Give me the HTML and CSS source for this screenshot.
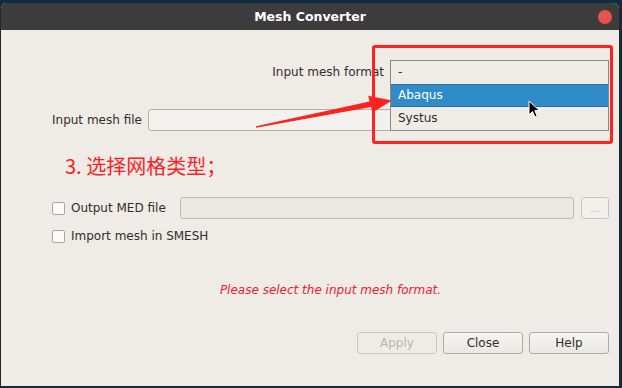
FILE: index.html
```html
<!DOCTYPE html>
<html lang="en">

<head>
    <meta charset="UTF-8" />
    <title>Mesh Converter</title>
    <link rel="stylesheet" href="styles.css">
</head>

<body>
    <div class="window">
        <div class="titlebar">
            <span class="title">Mesh Converter</span>
            <span class="close-dot"></span>
        </div>

        <div class="dialog">
            <div class="format-row">
                <label>Input mesh format</label>
                <div class="combo">-</div>
            </div>

            <div class="file-row">
                <label>Input mesh file</label>
                <div class="field"></div>
                <div class="dots">...</div>
            </div>

            <p class="note">3. 选择网格类型；</p>

            <div class="output-row">
                <div class="check-item wide">
                    <span class="box"></span>
                    <span>Output MED file</span>
                </div>
                <div class="field disabled"></div>
                <div class="dots disabled">...</div>
            </div>

            <div class="import-row">
                <div class="check-item">
                    <span class="box"></span>
                    <span>Import mesh in SMESH</span>
                </div>
            </div>

            <p class="error">Please select the input mesh format.</p>

            <div class="buttons">
                <button class="btn" disabled>Apply</button>
                <button class="btn">Close</button>
                <button class="btn">Help</button>
            </div>
        </div>
    </div>

    <!-- open combo popup -->
    <ul class="popup">
        <li>-</li>
        <li class="current">Abaqus</li>
        <li>Systus</li>
    </ul>

    <!-- annotation marks -->
    <div class="mark-box"></div>
    <svg class="mark-arrow" width="622" height="388" viewBox="0 0 622 388">
        <polygon points="255.9,126.3 369.6,101.6 368.2,95.8 392,100.5 372.4,112.6 371.1,106.9 256.1,127.7" fill="#ff2020" />
    </svg>

    <svg class="pointer" width="14" height="20" viewBox="0 0 14 20">
        <path d="M1 1 L1 15 L4.5 11.5 L7 17 L9.2 16 L6.8 10.6 L11.5 10.6 Z" fill="#000" stroke="#fff" stroke-width="1" stroke-linejoin="round" />
    </svg>
</body>

</html>
```

FILE: styles.css
```css
* {
    margin: 0;
    padding: 0;
    box-sizing: border-box;
}

body {
    background-color: #0f2d3f;
    font-family: 'DejaVu Sans', sans-serif;
    font-size: 12px;
    color: #2f2e2c;
    width: 622px;
    height: 388px;
    overflow: hidden;
    padding-top: 3px;
}

.window {
    width: 620px;
    height: 384px;
    border: 1px solid #262626;
    border-top: none;
    border-radius: 6px 6px 0 0;
    background-color: #efebe7;
    overflow: hidden;
}

.titlebar {
    height: 27px;
    background-color: #3c3c3c;
    display: flex;
    align-items: center;
    justify-content: center;
    position: relative;
}

.title {
    color: #ffffff;
    font-weight: bold;
    font-size: 12.5px;
}

.close-dot {
    position: absolute;
    right: 7px;
    top: 7px;
    width: 14px;
    height: 14px;
    border-radius: 50%;
    background-color: #e8524b;
}

.dialog {
    padding: 0 10px 0 51px;
}

.format-row {
    display: flex;
    justify-content: flex-end;
    align-items: center;
    gap: 6px;
    margin-top: 30px;
    height: 23px;
}

.combo {
    width: 219px;
    height: 23px;
    border: 1px solid #8c8884;
    padding: 3px 7px;
}

.file-row {
    display: flex;
    align-items: center;
    gap: 6px;
    margin-top: 26px;
    height: 22px;
}

.field {
    flex: 1;
    height: 22px;
    border: 1px solid #b3afaa;
    border-radius: 3px;
    background-color: #f3f1ee;
}

.dots {
    width: 28px;
    height: 22px;
    border: 1px solid #c8c4bf;
    border-radius: 3px;
    background-color: #f2f0ed;
    color: #bdb9b4;
    font-size: 10px;
    display: flex;
    align-items: center;
    justify-content: center;
}

.note {
    margin-top: 21px;
    margin-left: 13px;
    font-family: 'Noto Sans CJK SC', 'DejaVu Sans', sans-serif;
    font-size: 20px;
    line-height: 28px;
    color: #ff2020;
}

.output-row {
    display: flex;
    align-items: center;
    gap: 7px;
    margin-top: 17px;
    height: 22px;
}

.output-row .field {
    background-color: #ebe8e4;
    border-color: #bcb8b3;
}

.check-item {
    display: flex;
    align-items: center;
    gap: 6px;
}

.check-item.wide {
    width: 121px;
}

.box {
    width: 13px;
    height: 13px;
    border: 1px solid #a9a5a0;
    border-radius: 2px;
    background-color: #fbfbfa;
}

.import-row {
    margin-top: 7px;
    height: 20px;
    display: flex;
    align-items: center;
}

.error {
    margin-top: 36px;
    text-align: center;
    font-style: italic;
    color: #e5232b;
    line-height: 16px;
}

.buttons {
    display: flex;
    justify-content: flex-end;
    gap: 6px;
    margin-top: 34px;
}

.btn {
    width: 80px;
    height: 22px;
    font-family: 'DejaVu Sans', sans-serif;
    font-size: 12px;
    color: #2f2e2c;
    border: 1px solid #aeaaa5;
    border-radius: 3px;
    background: linear-gradient(#f6f5f3, #ebe8e4);
}

.btn:disabled {
    color: #b9b5b0;
    border-color: #ccc8c3;
    background: #efece8;
}

.popup {
    position: absolute;
    left: 390px;
    top: 60px;
    width: 219px;
    height: 71px;
    list-style: none;
    background-color: #efebe7;
    border: 1px solid #8c8884;
}

.popup li {
    height: 23px;
    line-height: 23px;
    padding-left: 7px;
}

.popup li.current {
    background-color: #308cc6;
    border: 1px solid #2b6f9e;
    border-left: none;
    border-right: none;
    color: #ffffff;
    line-height: 21px;
}

.mark-box {
    position: absolute;
    left: 372px;
    top: 45px;
    width: 241px;
    height: 99px;
    border: 3px solid #ff2020;
    border-radius: 3px;
}

.mark-arrow {
    position: absolute;
    left: 0;
    top: 0;
}

.pointer {
    position: absolute;
    left: 528px;
    top: 100px;
}
```
